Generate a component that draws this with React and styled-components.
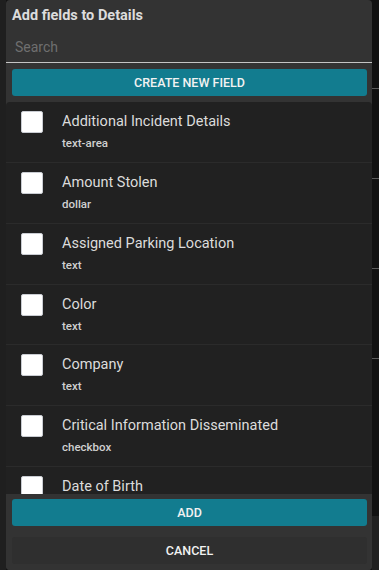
import React from "react";
import styled, { createGlobalStyle } from "styled-components";

const fields = [
  { name: "Additional Incident Details", type: "text-area" },
  { name: "Amount Stolen", type: "dollar" },
  { name: "Assigned Parking Location", type: "text" },
  { name: "Color", type: "text" },
  { name: "Company", type: "text" },
  { name: "Critical Information Disseminated", type: "checkbox" },
  { name: "Date of Birth", type: "date" },
];

const GlobalStyle = createGlobalStyle`
  html, body {
    margin: 0;
    padding: 0;
    background: #121212;
    font-family: Roboto, "Liberation Sans", sans-serif;
  }
`;

const Page = styled.div`
  display: flex;
  height: 570px;
  overflow: hidden;
`;

const LeftGutter = styled.div`
  width: 6px;
  background: #1f1f1f;
  flex-shrink: 0;
`;

const RightGutter = styled.div`
  flex: 1;
  display: flex;
  flex-direction: column;
  background: #111;
`;

const Mark = styled.div`
  height: 89px;
  flex-shrink: 0;
  border-bottom: 1px solid #5a5a5a;
  &:first-child {
    height: 88px;
  }
`;

const GutterFill = styled.div`
  margin-top: auto;
  height: 54px;
  background: #202020;
`;

const Dialog = styled.div`
  width: 366px;
  flex-shrink: 0;
  display: flex;
  flex-direction: column;
  background: #333;
  border-radius: 4px;
  overflow: hidden;
`;

const Title = styled.h2`
  margin: 0;
  height: 31px;
  line-height: 31px;
  padding: 0 6px;
  font-size: 14.5px;
  font-weight: 700;
  color: #dcdcdc;
`;

const Search = styled.input`
  height: 32px;
  box-sizing: border-box;
  border: none;
  border-bottom: 1px solid #c4c4c4;
  background: transparent;
  padding: 0 9px;
  font-family: inherit;
  font-size: 14px;
  color: #ddd;
  outline: none;
  &::placeholder {
    color: #6f6f6f;
  }
`;

const Button = styled.button`
  height: 27px;
  margin: ${(p) => p.$margin || "0 5px 0 6px"};
  border: none;
  border-radius: 3px;
  background: ${(p) => (p.$primary ? "#127c8f" : "#2f2f2f")};
  color: #f2f2f2;
  font-family: inherit;
  font-size: 12.5px;
  font-weight: 500;
  text-transform: uppercase;
  cursor: pointer;
  flex-shrink: 0;
`;

const List = styled.div`
  margin-top: 6px;
  height: 392px;
  flex-shrink: 0;
  background: #212121;
  border-radius: 4px 4px 0 0;
  overflow: hidden;
`;

const Row = styled.label`
  display: flex;
  align-items: flex-start;
  height: 59.85px;
  border-bottom: 1px solid #2b2b2b;
`;

const Box = styled.span`
  width: 22px;
  height: 22px;
  box-sizing: border-box;
  margin: 9px 0 0 15px;
  background: #fff;
  border: 1.5px solid #c9ccd2;
  border-radius: 2px;
  flex-shrink: 0;
`;

const Text = styled.div`
  margin-left: 19px;
  display: flex;
  flex-direction: column;
`;

const Name = styled.span`
  margin-top: 11px;
  font-size: 14.5px;
  line-height: 18px;
  color: #dcdcdc;
`;

const Type = styled.span`
  margin-top: 5px;
  font-size: 11.5px;
  font-weight: 500;
  line-height: 14px;
  color: #d0d0d0;
`;

const Footer = styled.div`
  flex: 1;
  display: flex;
  flex-direction: column;
  padding-top: 5px;
  gap: 11px;
  background: #333;
`;

export default function App() {
  return (
    <>
      <GlobalStyle />
      <Page>
        <LeftGutter />
        <Dialog>
          <Title>Add fields to Details</Title>
          <Search placeholder="Search" />
          <Button $primary $margin="6px 5px 0 6px">Create new field</Button>
          <List>
            {fields.map((f) => (
              <Row key={f.name}>
                <Box />
                <Text>
                  <Name>{f.name}</Name>
                  <Type>{f.type}</Type>
                </Text>
              </Row>
            ))}
          </List>
          <Footer>
            <Button $primary>Add</Button>
            <Button>Cancel</Button>
          </Footer>
        </Dialog>
        <RightGutter>
          <Mark />
          <Mark />
          <Mark />
          <Mark />
          <GutterFill />
        </RightGutter>
      </Page>
    </>
  );
}
